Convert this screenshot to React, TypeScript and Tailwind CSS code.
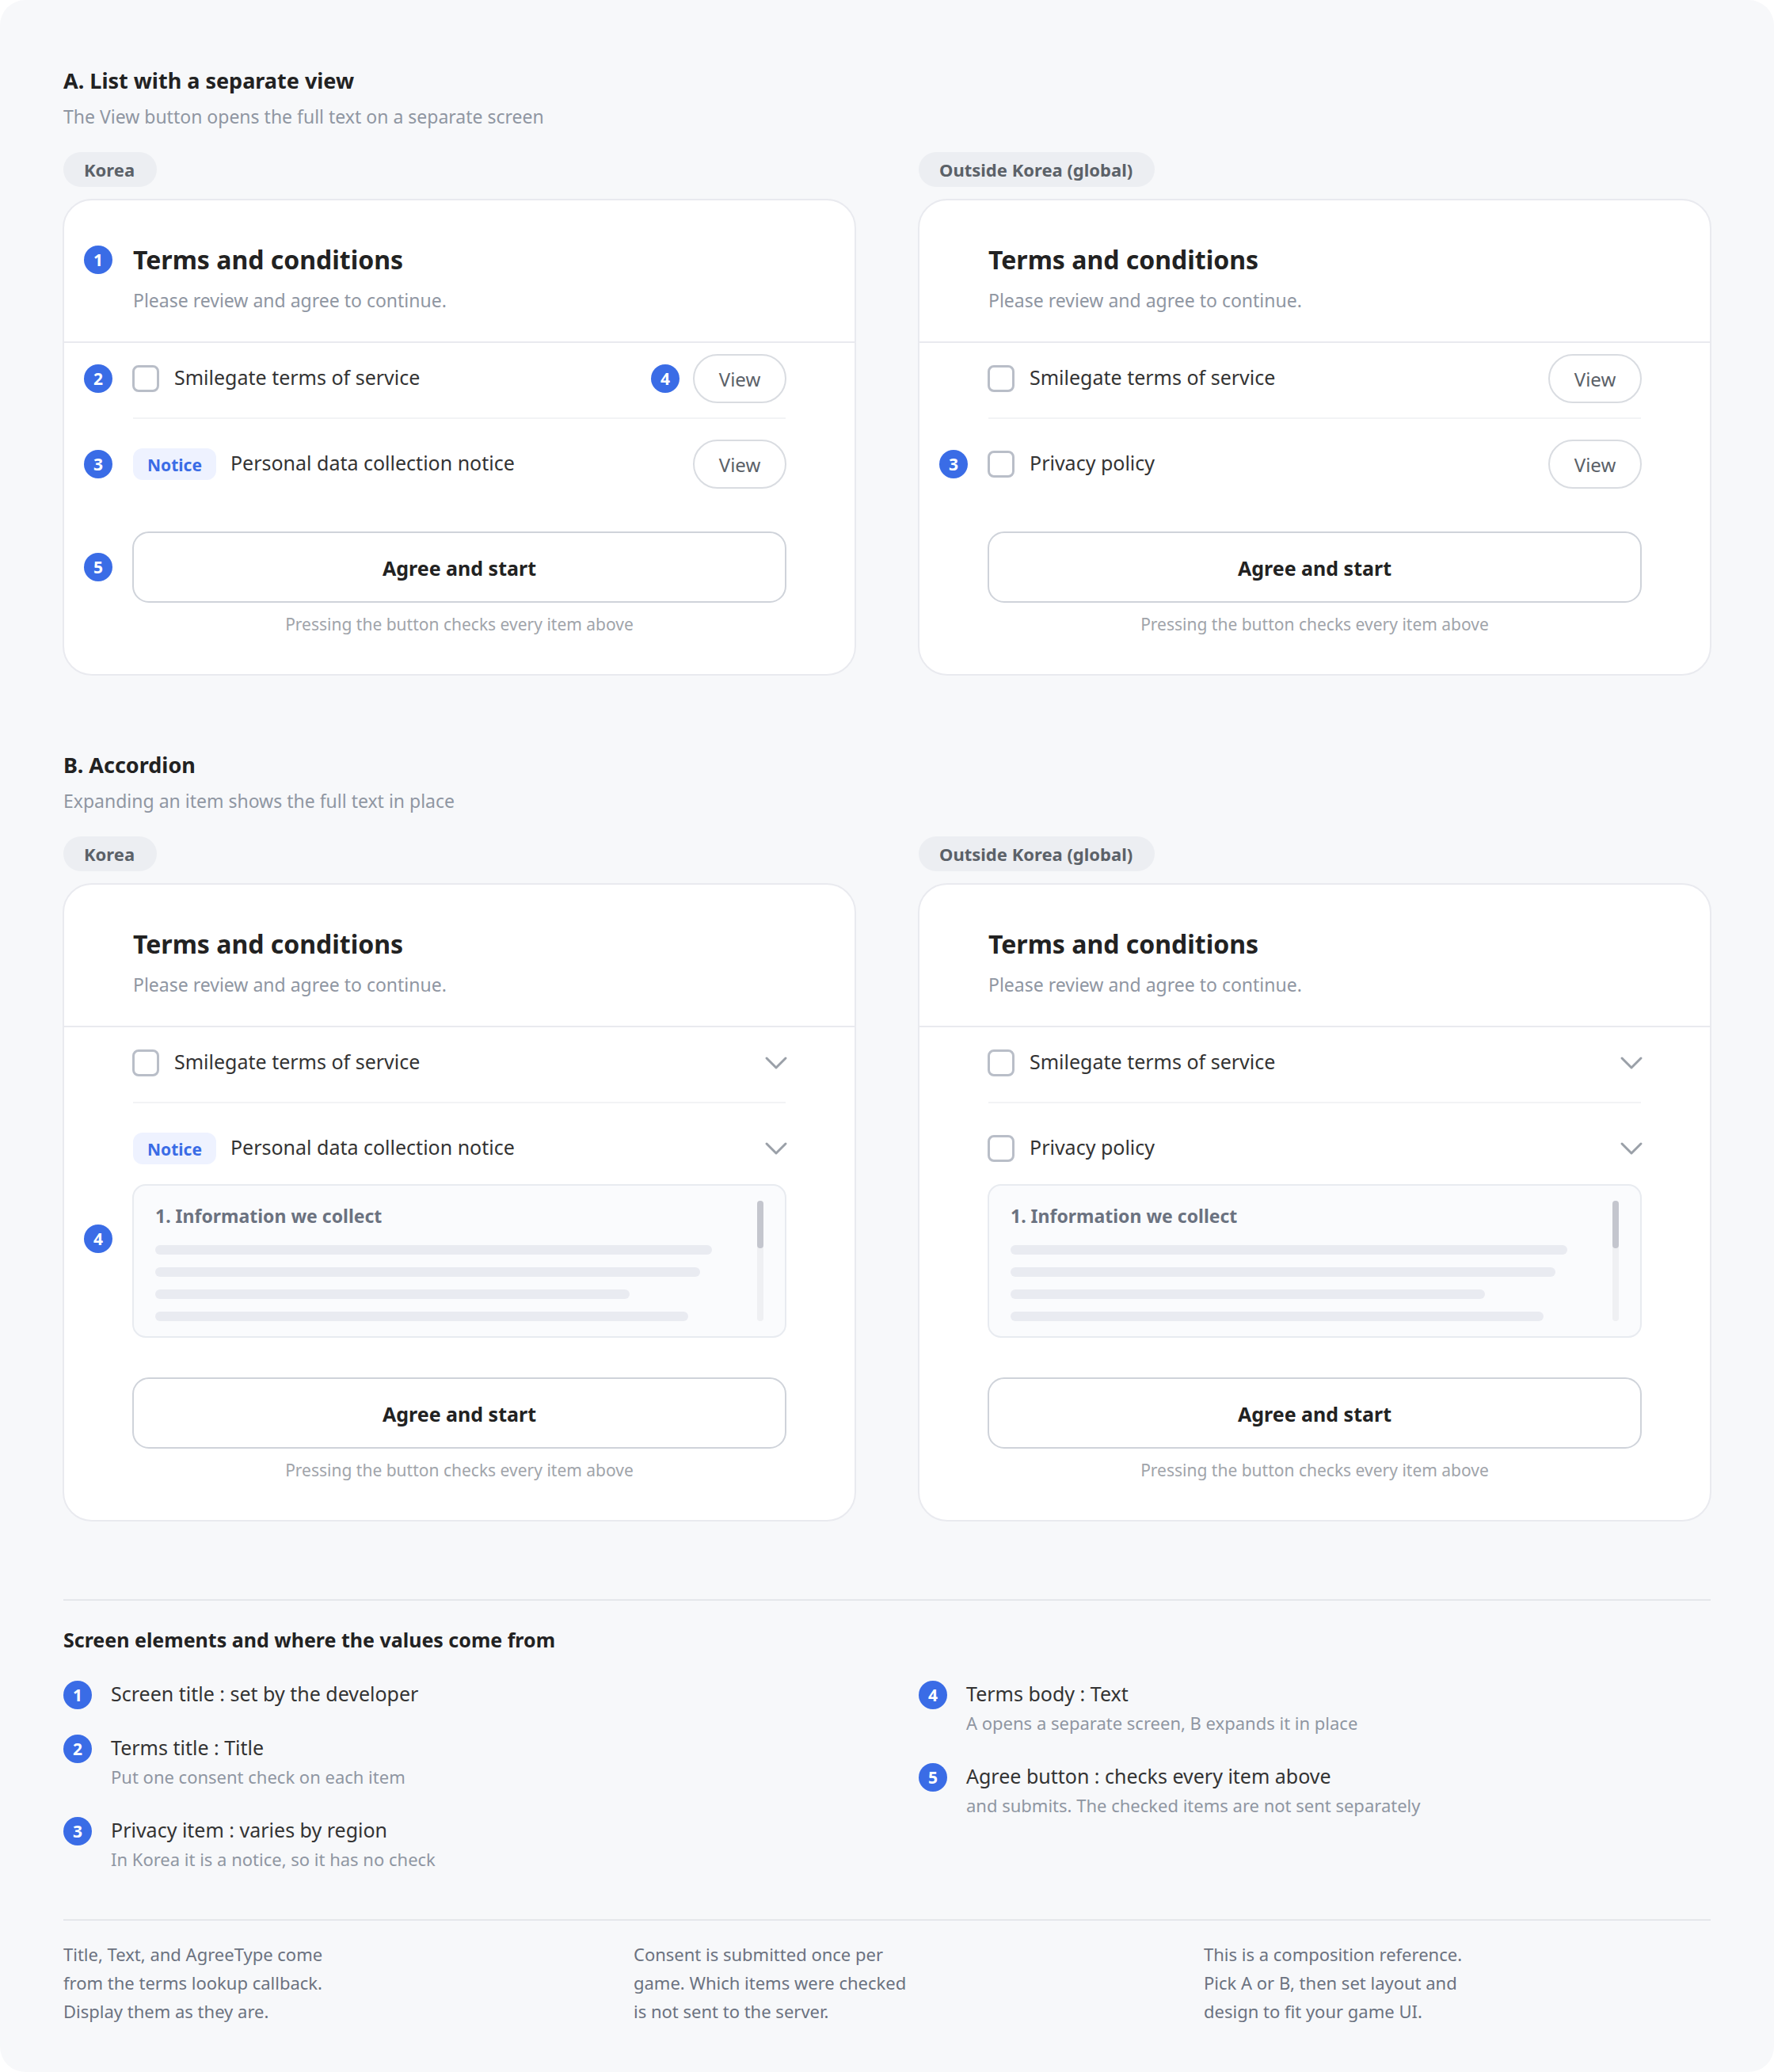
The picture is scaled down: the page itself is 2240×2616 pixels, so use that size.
import { useId, useState } from "react";
import type { ReactNode } from "react";
import clsx from "clsx";

type Variant = "list" | "accordion";

interface TermsItem {
  title: string;
  notice?: boolean;
  marker?: number;
  actionMarker?: number;
}

interface TermsCardProps {
  region: string;
  variant: Variant;
  items: TermsItem[];
  titleMarker?: number;
  bodyMarker?: number;
  buttonMarker?: number;
}

interface LegendItem {
  marker: number;
  label: string;
  note?: string;
}

const legend: LegendItem[][] = [
  [
    { marker: 1, label: "Screen title : set by the developer" },
    { marker: 2, label: "Terms title : Title", note: "Put one consent check on each item" },
    {
      marker: 3,
      label: "Privacy item : varies by region",
      note: "In Korea it is a notice, so it has no check",
    },
  ],
  [
    {
      marker: 4,
      label: "Terms body : Text",
      note: "A opens a separate screen, B expands it in place",
    },
    {
      marker: 5,
      label: "Agree button : checks every item above",
      note: "and submits. The checked items are not sent separately",
    },
  ],
];

const footnotes = [
  ["Title, Text, and AgreeType come", "from the terms lookup callback.", "Display them as they are."],
  ["Consent is submitted once per", "game. Which items were checked", "is not sent to the server."],
  ["This is a composition reference.", "Pick A or B, then set layout and", "design to fit your game UI."],
];

function Marker({ value }: { value: number }) {
  return (
    <span className="flex size-9 shrink-0 items-center justify-center rounded-full bg-[#3a6ce6] text-[21px] leading-9 font-bold text-white">
      {value}
    </span>
  );
}

// Left margin of a card row, holds the callout number when there is one.
function Gutter({ marker, children }: { marker?: number; children: ReactNode }) {
  return (
    <div className="flex items-center pr-22">
      <div className="w-22 shrink-0 pl-[26px]">
        {marker !== undefined && <Marker value={marker} />}
      </div>
      <div className="min-w-0 flex-1">{children}</div>
    </div>
  );
}

function Chevron() {
  return (
    <svg
      viewBox="0 0 24 12"
      fill="none"
      stroke="currentColor"
      strokeWidth="3"
      strokeLinecap="round"
      strokeLinejoin="round"
      className="h-3 w-6 overflow-visible"
      aria-hidden="true"
    >
      <path d="M0 0 12 12 24 0" />
    </svg>
  );
}

function TermsBody() {
  return (
    <div className="flex gap-5 rounded-2xl bg-[#fafbfd] px-7 py-5 outline-2 -outline-offset-1 outline-[#e8ebf0]">
      <div className="flex-1 pt-[3px]">
        <h4 className="text-[23px] leading-8 font-bold text-[#6b7280]">
          1. Information we collect
        </h4>
        <div className="mt-[21px] flex flex-col gap-4">
          <div className="h-3 w-[95%] rounded-md bg-[#e9ebf1]" />
          <div className="h-3 w-[93%] rounded-md bg-[#e9ebf1]" />
          <div className="h-3 w-[81%] rounded-md bg-[#e9ebf1]" />
          <div className="h-3 w-[91%] rounded-md bg-[#e9ebf1]" />
        </div>
      </div>
      <div className="w-2 rounded-full bg-[#eff0f3]">
        <div className="h-15 rounded-full bg-[#c4c6ce]" />
      </div>
    </div>
  );
}

function TermsCard({
  region,
  variant,
  items,
  titleMarker,
  bodyMarker,
  buttonMarker,
}: TermsCardProps) {
  const id = useId();
  const [checked, setChecked] = useState<boolean[]>(items.map(() => false));
  const [open, setOpen] = useState(true);
  const isAccordion = variant === "accordion";

  const toggle = (index: number) =>
    setChecked((prev) => prev.map((v, i) => (i === index ? !v : v)));

  return (
    <div className="flex flex-col items-start gap-4">
      <span className="flex h-11 items-center rounded-full bg-[#eceef2] pr-7 pl-[26px] text-[22px] font-bold text-[#5b6168]">
        {region}
      </span>

      <article className="w-full rounded-[36px] bg-white pb-[50px] outline-2 -outline-offset-1 outline-[#e9eaef]">
        <header className="border-b-2 border-[#e9eaef] pt-[54px] pb-9">
          <Gutter marker={titleMarker}>
            <h3 className="text-[32px] leading-11 font-bold text-[#222222]">
              Terms and conditions
            </h3>
          </Gutter>
          <p className="mt-[13px] px-22 text-[23px] leading-8 text-[#8f96a2]">
            Please review and agree to continue.
          </p>
        </header>

        {items.map((item, i) => (
          <div key={item.title}>
            {i > 0 && <hr className="mx-22 mt-[19px] border-t-2 border-[#f2f3f5]" />}
            <div className={clsx(i === 0 ? "pt-[15px]" : "pt-[27px]")}>
              <Gutter marker={item.marker}>
                <div className="flex h-15 items-center">
                  {item.notice ? (
                    <>
                      <span className="flex h-10 items-center rounded-xl bg-[#eef2ff] px-[18px] pt-1 text-[21px] font-bold text-[#3a6ce6]">
                        Notice
                      </span>
                      <span className="ml-[18px] pb-1 text-[25px] leading-9 text-[#333333]">
                        {item.title}
                      </span>
                    </>
                  ) : (
                    <>
                      <input
                        id={`${id}-${i}`}
                        type="checkbox"
                        checked={checked[i]}
                        onChange={() => toggle(i)}
                        className="-mx-px size-[34px] appearance-none rounded-lg border-3 border-[#b9bec8] bg-white checked:border-[#3a6ce6] checked:bg-[#3a6ce6]"
                      />
                      <label
                        htmlFor={`${id}-${i}`}
                        className="ml-5 pb-1 text-[25px] leading-9 text-[#333333]"
                      >
                        {item.title}
                      </label>
                    </>
                  )}

                  <div className="ml-auto flex items-center gap-[18px]">
                    {item.actionMarker !== undefined && <Marker value={item.actionMarker} />}
                    {isAccordion ? (
                      <button
                        type="button"
                        aria-label={item.title}
                        aria-expanded={i === items.length - 1 && open}
                        onClick={() => i === items.length - 1 && setOpen(!open)}
                        className="py-6 text-[#9aa0a8]"
                      >
                        <Chevron />
                      </button>
                    ) : (
                      <button
                        type="button"
                        className="h-15 w-29 rounded-full bg-white pt-0.5 text-2xl text-[#5b6168] outline-2 -outline-offset-1 outline-[#d9dce1]"
                      >
                        View
                      </button>
                    )}
                  </div>
                </div>
              </Gutter>
            </div>
          </div>
        ))}

        {isAccordion && open && (
          <div className="flex pt-4 pr-22">
            <div className="w-22 shrink-0 pt-[50px] pl-[26px]">
              {bodyMarker !== undefined && <Marker value={bodyMarker} />}
            </div>
            <div className="flex-1">
              <TermsBody />
            </div>
          </div>
        )}

        <div className={isAccordion ? "pt-13" : "pt-14"}>
          <Gutter marker={buttonMarker}>
            <button
              type="button"
              onClick={() => setChecked(items.map(() => true))}
              className="block h-22 w-full rounded-[20px] bg-white pt-1 text-[25px] font-bold text-[#222222] outline-2 -outline-offset-1 outline-[#cfd3da]"
            >
              Agree and start
            </button>
          </Gutter>
        </div>
        <p className="mt-3.5 px-22 text-center text-[21px] leading-7 text-[#a0a4aa]">
          Pressing the button checks every item above
        </p>
      </article>
    </div>
  );
}

function Section({
  title,
  description,
  children,
}: {
  title: string;
  description: string;
  children: ReactNode;
}) {
  return (
    <section>
      <h2 className="text-[27px] leading-9 font-bold text-[#222222]">{title}</h2>
      <p className="mt-[11px] text-[23px] leading-8 text-[#8f96a2]">{description}</p>
      <div className="mt-[29px] grid grid-cols-2 gap-20">{children}</div>
    </section>
  );
}

export default function App() {
  return (
    <main className="rounded-[32px] bg-[#f7f8fa] px-20 pt-21 pb-[59px] font-['Noto_Sans','Noto_Sans_CJK_KR',sans-serif]">
      <div className="flex flex-col gap-24">
        <Section
          title="A. List with a separate view"
          description="The View button opens the full text on a separate screen"
        >
          <TermsCard
            region="Korea"
            variant="list"
            titleMarker={1}
            buttonMarker={5}
            items={[
              { title: "Smilegate terms of service", marker: 2, actionMarker: 4 },
              { title: "Personal data collection notice", notice: true, marker: 3 },
            ]}
          />
          <TermsCard
            region="Outside Korea (global)"
            variant="list"
            items={[
              { title: "Smilegate terms of service" },
              { title: "Privacy policy", marker: 3 },
            ]}
          />
        </Section>

        <Section
          title="B. Accordion"
          description="Expanding an item shows the full text in place"
        >
          <TermsCard
            region="Korea"
            variant="accordion"
            bodyMarker={4}
            items={[
              { title: "Smilegate terms of service" },
              { title: "Personal data collection notice", notice: true },
            ]}
          />
          <TermsCard
            region="Outside Korea (global)"
            variant="accordion"
            items={[{ title: "Smilegate terms of service" }, { title: "Privacy policy" }]}
          />
        </Section>
      </div>

      <section className="mt-[99px] border-t-2 border-[#e5e7eb] pt-[31px]">
        <h2 className="text-[25px] leading-9 font-bold text-[#222222]">
          Screen elements and where the values come from
        </h2>
        <div className="mt-[34px] grid grid-cols-2 gap-20">
          {legend.map((column, i) => (
            <ul key={i} className="flex flex-col gap-8">
              {column.map((item) => (
                <li key={item.marker} className="flex gap-6">
                  <Marker value={item.marker} />
                  <div>
                    <p className="text-[25px] leading-8 text-[#333333]">{item.label}</p>
                    {item.note && (
                      <p className="mt-[3px] pb-px text-[22px] leading-9 text-[#8f96a2]">
                        {item.note}
                      </p>
                    )}
                  </div>
                </li>
              ))}
            </ul>
          ))}
        </div>
      </section>

      <footer className="mt-[57px] grid grid-cols-3 gap-20 border-t-2 border-[#e5e7eb] pt-6 text-[22px] leading-9 text-[#6b7280]">
        {footnotes.map((lines) => (
          <p key={lines[0]}>
            {lines.map((line) => (
              <span key={line} className="block">
                {line}
              </span>
            ))}
          </p>
        ))}
      </footer>
    </main>
  );
}
